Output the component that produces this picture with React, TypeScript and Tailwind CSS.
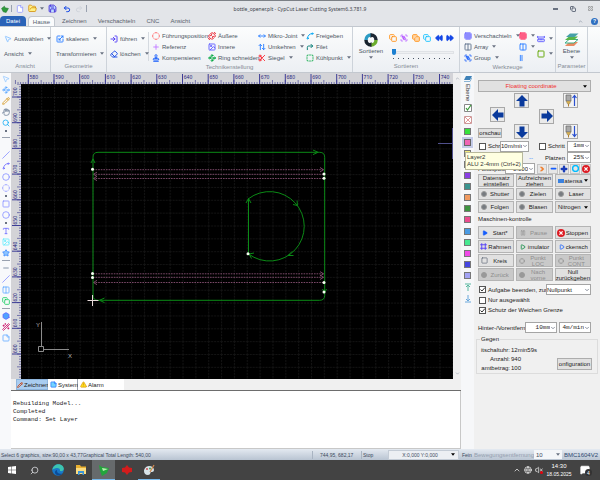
import React from 'react';
import {
  Undo2, Redo2, Save, File, FolderOpen, MousePointer2, Hand, Search, Type, Spline, Circle, Square, Minus, Slash,
  Hexagon, Wand2, Crosshair, Scaling, LogIn, Eraser, Plus, Copy, Layers, CircleDashed, ArrowUpDown, Scissors,
  Grid3x3, Group, BoxSelect, Columns2, Tally2, RulerDimensionLine, Rewind, FastForward, Globe, VolumeX,
  MessageSquareText, ChevronUp, ChevronDown, Star, StickyNote, Play, Pause, Frame, Waypoints, Stamp,
  CornerUpRight, Puzzle, ImageIcon, Pencil, TriangleAlert, MoveHorizontal,
} from 'lucide-react';

type IconType = React.ComponentType<{ className?: string; strokeWidth?: number }>;

// pixels per 10 mm on both rulers
const STEP = 25.7;

function Caret({ className = 'text-gray-500' }: { className?: string }) {
  return (
    <svg viewBox="0 0 6 4" className={`h-[3px] w-1 shrink-0 ${className}`}>
      <path d="M0 0h6L3 4z" fill="currentColor" />
    </svg>
  );
}

interface ToolProps {
  icon?: IconType;
  label?: string;
  color?: string;
  caret?: boolean;
}

function Tool({ icon: Icon, label, color = 'text-blue-500', caret }: ToolProps) {
  return (
    <button className="flex h-[11px] items-center gap-[2px] whitespace-nowrap text-left" aria-label={label || 'Werkzeug'}>
      {Icon && <Icon className={`size-2 shrink-0 ${color}`} strokeWidth={2.8} />}
      {label && <span>{label}</span>}
      {caret && <span className="pl-[2px]"><Caret /></span>}
    </button>
  );
}

function RibbonGroup({ title, className, children }: { title: string; className: string; children: React.ReactNode }) {
  return (
    <section className={`flex shrink-0 flex-col border-r border-[#cdd3da] pt-[3px] ${className}`}>
      <div className="flex flex-1">{children}</div>
      <h2 className="h-[10px] text-center leading-2 text-[#858c96]">{title}</h2>
    </section>
  );
}

function SortIcon() {
  return (
    <svg viewBox="0 0 28 28" className="size-[14px]">
      <path d="M14 4a10 10 0 0 1 10 10" fill="none" stroke="#1d2733" strokeWidth="7" />
      <path d="M24 14a10 10 0 0 1-10 10" fill="none" stroke="#6cae2e" strokeWidth="7" />
      <path d="M14 24A10 10 0 0 1 4 14" fill="none" stroke="#16222c" strokeWidth="7" />
      <path d="M4 14A10 10 0 0 1 14 4" fill="none" stroke="#2c9cc4" strokeWidth="7" />
      <path d="M13 0l7 5-7 5zM15 28l-7-5 7-5z" fill="#1d2733" />
    </svg>
  );
}

function LayerIcon() {
  return (
    <svg viewBox="0 0 30 28" className="h-[14px] w-[15px]">
      <path d="M2 26l8-8h18l-8 8z" fill="#e98a62" />
      <path d="M2 20l8-7h18l-8 7z" fill="#fff" stroke="#3cae86" strokeWidth="2" />
      <path d="M2 14l8-7h18l-8 7z" fill="#58b548" />
      <path d="M4 8l8-7h17l-8 7z" fill="#46a1a8" />
    </svg>
  );
}

function TitleBar() {
  return (
    <header className="relative flex h-4 items-center border-t border-[#7c8086] bg-[#e3e5e9]">
      <div className="flex items-center gap-[3px] pl-px">
        <svg viewBox="0 0 14 14" className="size-2"><path d="M1 6l5-4 1 3 6 1-4 7-5-1z" fill="#2f9a3c" stroke="#1f7a2c" /></svg>
        <span className="-ml-px h-[7px] w-px bg-gray-400" />
        <File className="ml-px size-2 fill-white text-indigo-400" strokeWidth={2} />
        <FolderOpen className="ml-px size-[9px] fill-yellow-200 text-yellow-600" strokeWidth={2} />
        <Caret />
        <Save className="ml-px size-[9px] fill-blue-200 text-indigo-700" strokeWidth={2.5} />
        <Undo2 className="ml-[3px] size-2 text-blue-700" strokeWidth={3} />
        <Redo2 className="ml-px size-2 text-gray-300" strokeWidth={3} />
        <span className="h-[7px] w-px bg-gray-400" />
      </div>
      <h1 className="absolute inset-x-0 text-center font-['Noto_Sans',sans-serif] text-[5px] text-[#3d424a]">
        bottle_opener.plt - CypCut Laser Cutting System6.3.781.9
      </h1>
      <div className="ml-auto flex items-center gap-3 pr-[7px] text-gray-500">
        <span className="h-[2px] w-[5px] border border-gray-500" />
        <Copy className="size-[6px]" strokeWidth={4} />
        <svg viewBox="0 0 10 10" className="size-[5px]"><path d="M1 1h3l1 2 1-2h3v3L7 5l2 1v3H6L5 7 4 9H1V6l2-1-2-1z" fill="#d8dade" stroke="#777" strokeWidth="1" /></svg>
      </div>
    </header>
  );
}

function Tabs() {
  return (
    <nav className="flex h-[10px] items-stretch bg-[#e3e5e9] text-[#59616c]">
      <a href="#datei" className="flex w-[26px] items-center justify-center rounded-t-sm bg-[#2a63b8] text-white">Datei</a>
      <a href="#hause" className="ml-[2px] flex w-[27px] items-center justify-center rounded-t-sm border border-b-0 border-[#c3c8cf] bg-[#fafbfc]">Hause</a>
      <a href="#zeichnen" className="ml-[7px] flex items-center">Zeichnen</a>
      <a href="#verschachteln" className="ml-[11px] flex items-center">Verschachteln</a>
      <a href="#cnc" className="ml-[11px] flex items-center">CNC</a>
      <a href="#ansicht" className="ml-[11px] flex items-center">Ansicht</a>
      <div className="ml-auto flex items-center gap-2 pr-[2px]">
        <ChevronUp className="size-[5px] text-gray-400" strokeWidth={4} />
        <span className="flex size-[7px] items-center justify-center rounded-full bg-[#2e6fc0] text-[5px] font-bold text-white">?</span>
      </div>
    </nav>
  );
}

function Ribbon() {
  return (
    <div className="flex h-[47px] overflow-hidden border-y border-[#c3c8cf] bg-gradient-to-b from-[#fcfdfd] to-[#eceff3] text-[#4b5563]">
      <RibbonGroup title="Ansicht" className="w-[51px]">
        <div className="flex flex-col gap-1 pt-[3px] pl-1">
          <Tool icon={MousePointer2} label="Auswählen" color="text-blue-300" caret />
          <Tool label="Ansicht" caret />
        </div>
      </RibbonGroup>
      <RibbonGroup title="Geometrie" className="w-14">
        <div className="flex flex-col gap-1 pt-[3px] pl-[5px]">
          <Tool icon={Scaling} label="skaleren" caret />
          <Tool label="Transformieren" caret />
        </div>
      </RibbonGroup>
      <RibbonGroup title="Technikenstellung" className="w-[246px]">
        <div className="my-[2px] flex w-[42px] flex-col gap-1 border-r border-[#d5dae0] pt-px pl-[3px]">
          <Tool icon={LogIn} label="führen" color="text-indigo-600" caret />
          <Tool icon={Eraser} label="löschen" color="text-blue-700" caret />
        </div>
        <div className="flex w-[57px] flex-col pl-[3px]">
          <Tool icon={CircleDashed} label="Führungsposition" color="text-red-400" />
          <Tool icon={Plus} label="Referenz" color="text-purple-400" />
          <Tool icon={Stamp} label="Kompensieren" color="text-blue-600" />
        </div>
        <div className="flex w-[51px] flex-col pl-[2px]">
          <Tool icon={Puzzle} label="Äußere" color="text-red-600" />
          <Tool icon={ImageIcon} label="Innere" color="text-indigo-500" />
          <Tool icon={Waypoints} label="Ring schneiden" color="text-green-600" />
        </div>
        <div className="flex w-12 flex-col pl-px">
          <Tool icon={MoveHorizontal} label="Mikro-Joint" caret />
          <Tool icon={ArrowUpDown} label="Umkehren" caret />
          <Tool icon={Scissors} label="Siegel" color="text-red-500" caret />
        </div>
        <div className="flex flex-col pl-px">
          <Tool icon={Spline} label="Freigeben" color="text-sky-500" />
          <Tool icon={CornerUpRight} label="Filet" color="text-teal-700" />
          <Tool icon={BoxSelect} label="Kühlpunkt" color="text-green-600" caret />
        </div>
      </RibbonGroup>
      <RibbonGroup title="Sortieren" className="w-[107px]">
        <button className="flex w-9 flex-col items-center pt-[3px]">
          <SortIcon />
          <span className="leading-[9px]">Sortieren</span>
          <Caret />
        </button>
        <div className="flex flex-1 flex-col pt-1 pr-[5px]">
          <div className="flex items-center justify-between">
            <Copy className="size-2 text-orange-400" strokeWidth={2.5} />
            <Group className="size-2 text-purple-500" strokeWidth={2.5} />
            <Copy className="size-2 fill-orange-200 text-orange-400" strokeWidth={2.5} />
            <Copy className="size-2 text-sky-400" strokeWidth={2.5} />
            <Rewind className="size-2 fill-blue-700 text-blue-700" />
            <FastForward className="size-2 fill-blue-700 text-blue-700" />
          </div>
          <div className="mt-[7px] flex items-center">
            <span className="ml-[3px] h-[6px] w-1 rounded-b-sm bg-[#1b7fd0]" />
            <span className="h-[3px] flex-1 border border-[#dfe2e6] bg-[#eef0f2]" />
          </div>
          <div className="mt-[3px] flex justify-between px-1">
            {Array.from({ length: 12 }, (_, i) => <span key={i} className="size-px bg-gray-600" />)}
          </div>
        </div>
      </RibbonGroup>
      <RibbonGroup title="Werkzeuge" className="w-24">
        <div className="flex w-[59px] flex-col pl-1">
          <Tool icon={Grid3x3} label="Verschachteln" color="text-indigo-500" caret />
          <Tool icon={Columns2} label="Array" color="text-slate-500" caret />
          <Tool icon={Group} label="Group" color="text-blue-600" caret />
        </div>
        <div className="flex w-[18px] flex-col">
          <Tool icon={Grid3x3} color="text-rose-500" caret />
          <Tool icon={Columns2} color="text-blue-500" caret />
          <Tool icon={Tally2} color="text-blue-500" />
        </div>
        <div className="flex flex-col gap-1 pt-[3px]">
          <Tool icon={RulerDimensionLine} color="text-indigo-500" caret />
          <Tool icon={Square} color="text-lime-600" caret />
        </div>
      </RibbonGroup>
      <RibbonGroup title="Parameter" className="w-8">
        <button className="flex flex-1 flex-col items-center pt-[3px]">
          <LayerIcon />
          <span className="leading-[9px]">Ebene</span>
          <Caret />
        </button>
      </RibbonGroup>
    </div>
  );
}

const drawTools: (['dot' | 'line'] | [IconType, string])[] = [
  [MousePointer2, 'text-blue-300'], [Waypoints, 'text-blue-400'], [Pencil, 'text-yellow-600'], [Hand, 'text-slate-500'],
  [Search, 'text-sky-500'], ['dot'], ['line'], [Slash, 'text-indigo-400'], [Spline, 'text-indigo-500'],
  [Circle, 'text-indigo-400'], [CircleDashed, 'text-indigo-400'], ['dot'], [Square, 'text-indigo-400'],
  [Circle, 'text-indigo-400'], ['dot'], [Type, 'text-indigo-500'], [ImageIcon, 'text-cyan-300'],
  [Star, 'fill-blue-300 text-blue-500'], ['line'], [Minus, 'text-slate-500'], [Slash, 'text-indigo-400'],
  [Columns2, 'text-blue-400'], [Copy, 'text-green-500'], ['line'], [Hexagon, 'fill-blue-400 text-indigo-500'],
  [Wand2, 'text-pink-700'], [StickyNote, 'text-blue-400'],
];

function DrawToolbar() {
  return (
    <aside className="flex w-[11px] shrink-0 flex-col items-center gap-[3px] bg-[#f8f9fb] pt-[2px]">
      {drawTools.map(([Icon, color], i) => {
        if (Icon === 'dot') return <span key={i} className="size-[2px] bg-gray-500" />;
        if (Icon === 'line') return <span key={i} className={i === 6 ? 'mt-[2px] mb-[10px] h-px w-2 bg-gray-400' : 'h-px w-2 bg-gray-400'} />;
        return (
          <button key={i} aria-label={`Zeichenwerkzeug ${i + 1}`}>
            <Icon className={`size-2 ${color}`} strokeWidth={2.2} />
          </button>
        );
      })}
    </aside>
  );
}

function TopRuler() {
  return (
    <svg className="h-[11px] w-full bg-[#d3d3d7] font-['Noto_Sans']">
      <g transform="translate(-11 -73)">
        {Array.from({ length: 170 }, (_, i) => {
          const x = 28.3 + ((i - 5) * STEP) / 10;
          return <path key={i} d={`M${x} 84v${i % 5 === 0 ? -4 : -2}`} stroke="#5a5aa0" strokeWidth="0.8" />;
        })}
        {Array.from({ length: 17 }, (_, i) => (
          <g key={i}>
            <path d={`M${28.3 + i * STEP} 74v10`} stroke="#3c3c96" strokeWidth="1" />
            <text x={29.5 + i * STEP} y="79" fontSize="5" fill="#22227c">{580 + i * 10}</text>
          </g>
        ))}
      </g>
    </svg>
  );
}

function SideRuler() {
  return (
    <svg className="h-full w-[10px] shrink-0 bg-[#d3d3d7] font-['Noto_Sans']">
      <g transform="translate(-11 -84)">
        {Array.from({ length: 115 }, (_, i) => {
          const y = 97 + ((i - 5) * STEP) / 10;
          return <path key={i} d={`M21 ${y}h${i % 5 === 0 ? -4 : -2}`} stroke="#5a5aa0" strokeWidth="0.8" />;
        })}
        {Array.from({ length: 11 }, (_, i) => (
          <g key={i}>
            <path d={`M12 ${97 + i * STEP}h9`} stroke="#3c3c96" strokeWidth="1" />
            <text transform={`translate(17 ${96 + i * STEP}) rotate(-90)`} fontSize="5" fill="#22227c">{700 - i * 10}</text>
          </g>
        ))}
      </g>
    </svg>
  );
}

const cutLines = [
  { y: 169.7, dir: 1 }, { y: 174.3, dir: -1 }, { y: 178.5, dir: -1 },
  { y: 273.8, dir: 1 }, { y: 277.3, dir: 1 }, { y: 282.5, dir: -1 },
];
const startPoints = [[92.5, 169.3], [324, 174], [324, 178.3], [92.5, 273.5], [92.5, 277.5], [324, 282.5], [324, 292], [248, 253.7]];

function Drawing() {
  return (
    <svg className="min-w-0 flex-1 bg-black font-['Liberation_Sans']">
      <defs>
        <pattern id="grid" width="12.85" height="12.85" patternUnits="userSpaceOnUse" x="28.3" y="97">
          <path d="M0 .5h13M.5 0v13" stroke="#131313" strokeWidth="1" strokeDasharray="2 1" />
        </pattern>
      </defs>
      <g transform="translate(-21 -84)" fill="none">
        <rect x="21" y="84" width="3000" height="2000" fill="url(#grid)" />
        {cutLines.map(({ y, dir }) => (
          <g key={y} stroke="#875073" strokeWidth="0.9">
            <path d={`M93 ${y}H324`} strokeDasharray="1.6 1" />
            <path d={dir > 0 ? `M320 ${y - 2.2}l3.5 2.2-3.5 2.2` : `M97 ${y - 2.2}l-3.5 2.2 3.5 2.2`} />
          </g>
        ))}
        <g stroke="#0b8a16" strokeWidth="1">
          <path d="M93 296V157.300q0-5 5-5H319.700q5 0 5 5V295.300q0 5-5 5H98q-5 0-5-5" />
          <path d="M248.500 253.900V198.700A34.700 34.700 0 1 1 248.500 253.900" />
          <path d="M91 163l2-4 2 4M313 150l5 2.300-5 2.300M104.500 298l-5 2.300 5 2.300M322.500 289l2 4 2-4" />
          <path d="M246 203l2.500-4.500 2.500 4.500M293 204.500l4.500 1-.5-5M292 251.500l-4 4 5.500 0M254 253l-5 1 2.500 4.500" />
        </g>
        {startPoints.map(([x, y], i) => <circle key={i} cx={x} cy={y} r="1.5" fill="#f4fff0" />)}
        <path d="M87.500 300.500h11M92.500 295v11" stroke="#e8dada" />
        <path d="M438 143.500h15M452.500 128v31" stroke="#50508c" />
        <g stroke="#8c8c8c">
          <path d="M38.500 346.500h5v5h-5zM41.500 346v-24M44 349.500h25" />
        </g>
        <g fill="#b0b0b0" fontSize="6">
          <text x="36" y="327">Y</text>
          <text x="68" y="358">X</text>
        </g>
      </g>
    </svg>
  );
}

function Workspace() {
  return (
    <main className="flex min-w-0 flex-1 flex-col">
      <div className="flex flex-1">
        <div className="flex min-w-0 flex-1 flex-col">
          <TopRuler />
          <div className="flex min-h-[294px] flex-1"><SideRuler /><Drawing /></div>
        </div>
        <div className="flex w-2 flex-col items-center justify-between bg-[#f0f0f0] py-[3px] text-gray-400">
          <ChevronUp className="size-[5px]" strokeWidth={3} />
          <ChevronDown className="size-[5px]" strokeWidth={3} />
        </div>
      </div>
      <div className="flex h-3 items-stretch border-b border-[#6d6d6d] bg-[#f0f0f0] text-[#222]">
        <button className="ml-[5px] flex w-8 items-center gap-px border border-[#8fb5dc] bg-[#a9cdf0]">
          <Pencil className="size-[6px] shrink-0 text-orange-700" strokeWidth={3} />Zeichnen
        </button>
        <button className="flex w-[30px] items-center gap-px border-r border-gray-400 bg-white pl-[2px]">
          <StickyNote className="size-[7px] shrink-0 fill-sky-300 text-blue-600" />System
        </button>
        <button className="flex w-[46px] items-center gap-px bg-white pl-[2px]">
          <TriangleAlert className="size-[7px] shrink-0 fill-yellow-300 text-yellow-600" />Alarm
        </button>
      </div>
      <pre className="h-[58px] border-r border-b border-[#c8c8c8] bg-white pt-[9px] pl-[2px] font-['Liberation_Mono',monospace] text-[6px] leading-[8px] text-[#222]">
        {'Rebuilding Model...\nCompleted\nCommand: Set Layer'}
      </pre>
    </main>
  );
}

const layerColors = ['#37e23c', '#f064b4', '#f4ec7c', '#f3a0a0', '#8a3fe4', '#3b9490', '#f09a60', '#3e9440', '#ea4b8e', '#4a9be4', '#46e890', '#f04ae8', '#4545e0', '#a3a3f4'];

function LayerBar() {
  return (
    <aside className="relative flex w-[13px] shrink-0 flex-col items-center bg-[#f6f7f9] pt-[2px]">
      <svg viewBox="0 0 8 8" className="size-2"><path d="M0 5l2-4h6L6 5z" fill="#3f82b8" /><path d="M0 6.500h6l2-4" fill="none" stroke="#8ab4d4" /></svg>
      <span className="mt-px flex h-5 items-center text-[6px] leading-[7px] text-[#333] [writing-mode:vertical-rl]">Ebene</span>
      <div className="flex h-[199px] flex-col items-center justify-between">
        <svg viewBox="0 0 8 8" className="size-2"><path d="M.5.5h7v7h-7z" fill="#fff" stroke="#888" /><path d="M2 4l1.500 2L7 1" fill="none" stroke="#3a9a3a" strokeWidth="1.200" /></svg>
        <svg viewBox="0 0 8 8" className="size-2"><path d="M.5.5h7v7h-7z" fill="#fff" stroke="#c99" /><path d="M1 1l6 6M7 1L1 7" stroke="#e49a9a" /></svg>
        {layerColors.map((c, i) => (
          <button
            key={c}
            aria-label={`Layer${i + 1}`}
            style={{ backgroundColor: c }}
            className={i === 1 ? 'size-[7px] border border-[#666] outline-2 outline-[#c4cbe8]' : 'size-[7px] border border-[#777]'}
          />
        ))}
        <svg viewBox="0 0 8 8" className="size-2"><path d="M1 1h6M4 8V2M2 4l2-2 2 2" fill="none" stroke="#58b8a0" /></svg>
        <svg viewBox="0 0 8 8" className="size-2"><path d="M1 7h6M4 0v6M2 4l2 2 2-2" fill="none" stroke="#6aa8dc" /></svg>
      </div>
      <div role="tooltip" className="absolute top-[79px] left-1 z-10 border border-[#b8b89c] bg-[#ffffe1] px-px py-px text-[6px] leading-[7px] whitespace-nowrap text-[#333]">
        Layer2<br />ALU 2-4mm (Ctrl+2)
      </div>
    </aside>
  );
}

function ArrowButton({ turn, label }: { turn: string; label: string }) {
  return (
    <button aria-label={label} className="flex size-[15px] items-center justify-center border border-[#a8a8a8] bg-[#eaeaea]">
      <svg viewBox="0 0 12 12" className={`size-3 ${turn}`}><path d="M6 0l6 6H8.500v5.500h-5V6H0z" fill="#0a3a9c" /></svg>
    </button>
  );
}

function NozzleButton({ down }: { down?: boolean }) {
  return (
    <button aria-label={down ? 'Z ab' : 'Z auf'} className="flex size-[15px] items-center justify-center border border-[#a8a8a8] bg-[#f2f2f2]">
      <svg viewBox="0 0 13 13" className="size-[13px]">
        <path d="M2 1h5v6H2z" fill="#aaa" stroke="#666" strokeWidth=".7" />
        <path d="M2 7h5l-1.500 3h-2z" fill="#d8b050" stroke="#777" strokeWidth=".4" />
        <path d="M4.500 10v2.500" stroke="#b08030" />
        <path d={down ? 'M10.500 1v10M8.500 9l2 2.500 2-2.500' : 'M10.500 12V2M8.500 4l2-2.500 2 2.500'} fill="none" stroke="#2a50d0" strokeWidth="1.200" />
      </svg>
    </button>
  );
}

function Drop({ value, label, className }: { value: string; label: string; className: string }) {
  return (
    <span className={`flex h-[11px] shrink-0 items-center border border-[#a5a5a5] bg-white ${className}`}>
      <select aria-label={label} className="min-w-0 flex-1 appearance-none bg-transparent text-[#222]">
        <option>{value}</option>
      </select>
      <ChevronDown className="pointer-events-none size-[6px] shrink-0 text-gray-500" strokeWidth={3} />
    </span>
  );
}

function Check({ label, checked }: { label: string; checked?: boolean }) {
  return (
    <label className="flex h-[10px] items-center gap-[2px] whitespace-nowrap">
      <span className="relative flex size-[7px] shrink-0">
        <input type="checkbox" defaultChecked={checked} className="peer size-[7px] appearance-none border border-[#555] bg-white" />
        <svg viewBox="0 0 7 7" className="pointer-events-none absolute inset-0 hidden size-[7px] peer-checked:block">
          <path d="M1.500 3.500L3 5l3-3.500" fill="none" stroke="#333" />
        </svg>
      </span>
      {label}
    </label>
  );
}

function Dot({ className = 'bg-[#777b80]' }: { className?: string }) {
  return <span className={`ml-px size-[6px] shrink-0 rounded-full border border-[#9a9a9a] ${className}`} />;
}

function StopIcon() {
  return (
    <svg viewBox="0 0 10 10" className="size-2 shrink-0">
      <circle cx="5" cy="5" r="5" fill="#dc1c24" />
      <path d="M3 3l4 4M7 3L3 7" stroke="#fff" strokeWidth="1.600" />
    </svg>
  );
}

function PanelButton({ icon, children, disabled, className = 'h-[13px]' }: { icon?: React.ReactNode; children: React.ReactNode; disabled?: boolean; className?: string }) {
  return (
    <button
      disabled={disabled}
      className={`flex min-w-0 items-center border border-[#b4b4b4] bg-[#e1e1e1] px-px whitespace-nowrap disabled:bg-[#c9c9c9] disabled:text-[#8e8e8e] ${className}`}
    >
      {icon}
      <span className="flex min-w-0 flex-1 justify-center text-center leading-[6px]">{children}</span>
    </button>
  );
}

function ControlPanel() {
  return (
    <aside className="w-[126px] shrink-0 bg-[#f0f0f0] text-[6px] text-[#222]">
      <div className="flex flex-col pt-[7px] pr-[9px] pl-1">
        <div className="flex h-3 items-center border border-[#adadad] bg-[#e1e1e1] pr-[3px]">
          <select aria-label="Koordinaten" className="min-w-0 flex-1 appearance-none text-center [text-align-last:center] text-[#f03030]">
            <option>Floating coordinate</option>
          </select>
          <Caret className="text-black" />
        </div>
        <div className="mt-px flex items-end">
          <div className="flex flex-col items-start">
            <span className="ml-3"><ArrowButton turn="-rotate-90" label="Links" /></span>
            <button className="mt-[6px] mb-px flex h-[10px] w-6 justify-center border border-[#adadad] bg-[#e1e1e1] leading-2">orschau</button>
          </div>
          <div className="ml-[9px] flex flex-col gap-4">
            <ArrowButton turn="" label="Oben" />
            <ArrowButton turn="rotate-180" label="Unten" />
          </div>
          <div className="ml-[10px] self-center"><ArrowButton turn="rotate-90" label="Rechts" /></div>
          <div className="ml-[9px] flex flex-col gap-4">
            <NozzleButton />
            <NozzleButton down />
          </div>
        </div>
        <div className="mt-px flex h-3 items-center justify-between">
          <div className="flex w-[51px] items-center pl-px">
            <div className="w-[21px]"><Check label="Schr" /></div>
            <Drop label="Schnell" value="10m/min" className="w-[29px]" />
          </div>
          <div className="flex items-center">
            <div className="w-7"><Check label="Schritt" /></div>
            <Drop label="Schritt" value="1mm" className="w-6 font-['Liberation_Mono'] [&>select]:text-right" />
          </div>
        </div>
        <div className="flex h-[11px] items-center justify-end">
          <span className="mr-3 text-blue-500">--</span>
          <span className="mr-[2px]">Platzen</span>
          <Drop label="Platzen" value="25%" className="w-6 font-['Liberation_Mono'] [&>select]:text-right" />
        </div>
        <div className="flex h-[11px] items-center">
          <span className="w-[27px] whitespace-nowrap">Fokusposi</span>
          <Drop label="Fokusposition" value="0.000" className="w-[30px] [&>select]:text-right" />
          <div className="ml-auto flex gap-px">
            <button aria-label="Weiter" className="flex size-[10px] items-center justify-center border border-[#c4c4c4] bg-[#e6e6e6]">
              <svg viewBox="0 0 8 8" className="size-[6px]"><path d="M1 1h3l3 3-3 3H1l3-3z" fill="#f08030" /></svg>
            </button>
            <button aria-label="Minus" className="flex size-[10px] items-center justify-center border border-[#c4c4c4] bg-[#e6e6e6]"><Minus className="size-[7px] text-blue-600" strokeWidth={6} /></button>
            <button aria-label="Plus" className="flex size-[10px] items-center justify-center border border-[#c4c4c4] bg-[#e6e6e6]"><Plus className="size-2 text-blue-800" strokeWidth={7} /></button>
            <button aria-label="Kreis" className="flex size-[10px] items-center justify-center border border-[#c4c4c4] bg-[#e6e6e6]"><Circle className="size-[7px] text-sky-400" strokeWidth={5} /></button>
            <button aria-label="Abbrechen" className="flex size-[10px] items-center justify-center border border-[#c4c4c4] bg-[#e6e6e6]"><StopIcon /></button>
          </div>
        </div>
        <div className="grid grid-cols-3 gap-x-[2px] gap-y-px">
          <PanelButton className="h-[13px]">Datensatz<br />einstellen</PanelButton>
          <PanelButton className="h-[13px]">Aufzeichnen<br />ziehen</PanelButton>
          <PanelButton className="h-[13px]" icon={<span className="ml-px h-1 w-[6px] shrink-0 bg-[#3b82e0]" />}><span className="flex items-center gap-[2px]">atensa<Caret className="text-black" /></span></PanelButton>
          <PanelButton className="h-3" icon={<Dot />}>Shutter</PanelButton>
          <PanelButton className="h-3" icon={<Dot />}>Zielen</PanelButton>
          <PanelButton className="h-3" icon={<Dot />}>Laser</PanelButton>
          <PanelButton className="h-3" icon={<Dot />}>Folgen</PanelButton>
          <PanelButton className="h-3" icon={<Dot />}>Blasen</PanelButton>
          <PanelButton className="h-3"><span className="flex items-center gap-[3px]">Nitrogen<Caret className="text-black" /></span></PanelButton>
        </div>
        <h3 className="mt-[2px] h-[11px] leading-2">Maschinen-kontrolle</h3>
        <div className="grid grid-cols-3 gap-x-[2px] gap-y-px">
          <PanelButton icon={<Play className="ml-[2px] size-[6px] fill-blue-600 text-blue-600" />}>Start*</PanelButton>
          <PanelButton disabled icon={<Pause className="ml-[2px] size-[6px]" />}>Pause</PanelButton>
          <PanelButton icon={<StopIcon />}>Stoppen</PanelButton>
          <PanelButton icon={<Frame className="size-[7px] text-indigo-600" strokeWidth={3} />}>Rahmen</PanelButton>
          <PanelButton icon={<Play className="ml-[2px] size-[6px] text-green-700" strokeWidth={3} />}>imulator</PanelButton>
          <PanelButton icon={<Play className="ml-[2px] size-[6px] text-blue-600" strokeWidth={3} />}>ckensch</PanelButton>
          <PanelButton icon={<Square className="ml-px size-[7px] text-gray-600" />}>Kreis</PanelButton>
          <PanelButton disabled icon={<Crosshair className="ml-px size-[6px]" />}>Punkt<br />LOC</PanelButton>
          <PanelButton disabled icon={<Crosshair className="ml-px size-[6px]" />}>Punkt<br />CONT</PanelButton>
          <PanelButton disabled icon={<Dot className="bg-[#999]" />}>Zurück</PanelButton>
          <PanelButton disabled icon={<Dot className="bg-[#999]" />}>Nach<br />vorne</PanelButton>
          <PanelButton>Null<br />zurückgeben</PanelButton>
        </div>
        <div className="mt-[3px] flex h-[11px] items-center justify-between">
          <div className="w-[68px] pl-px"><Check label="Aufgabe beenden, zur" checked /></div>
          <Drop label="Rückkehrpunkt" value="Nullpunkt" className="w-[45px]" />
        </div>
        <div className="pl-px">
          <Check label="Nur ausgewählt" />
          <Check label="Schutz der Weichen Grenze" checked />
        </div>
        <div className="mt-[7px] flex items-center gap-[2px]">
          <span className="min-w-0 flex-1 whitespace-nowrap">Hinter-/Vorentfern</span>
          <Drop label="Entfernung" value="10mm" className="w-8 font-['Liberation_Mono'] [&>select]:text-right" />
          <Drop label="Geschwindigkeit" value="4m/min" className="w-8 font-['Liberation_Mono'] [&>select]:text-right" />
        </div>
      </div>
      <fieldset className="mx-[2px] mt-[3px] flex h-[38px] items-end justify-between border border-[#dcdcdc] pr-[5px] pl-[2px]">
        <legend className="ml-px px-px leading-[7px]">Gegen</legend>
        <dl className="grid grid-cols-[31px_auto] gap-x-px leading-[9px] whitespace-nowrap">
          <dt className="text-right">itschaltuhr:</dt><dd>12min59s</dd>
          <dt className="text-right">Anzahl:</dt><dd>940</dd>
          <dt className="text-right">amtbetrag:</dt><dd>100</dd>
        </dl>
        <button className="mb-[3px] flex h-3 w-[35px] items-center justify-center border border-[#adadad] bg-[#e1e1e1]">onfiguration</button>
      </fieldset>
    </aside>
  );
}

function StatusBar() {
  return (
    <footer className="flex h-[11px] items-center bg-gradient-to-b from-[#e4eaf1] to-[#b9c4d2] text-[5px] whitespace-nowrap text-[#3d4a5c]">
      <span className="min-w-0 flex-1 pl-px">Select 6 graphics, size:90,00 x 43,77Graphical Total Length: 540,00</span>
      <span className="w-[49px] border-l border-[#a9b4c2] pl-[7px]">744,95, 682,17</span>
      <span className="w-[27px] border-l border-[#a9b4c2] pl-px">Stop</span>
      <button className="flex h-[10px] w-[71px] items-center border border-[#c4ccd6] bg-[#eceff3] pr-[3px]">
        <span className="flex-1">X:0,000 Y:0,000</span><Caret className="text-black" />
      </button>
      <span className="w-[14px] pl-[3px]">Fein</span>
      <label htmlFor="distance" className="w-[61px] pl-px text-[6px] text-[#95a1b0]">Bewegungsentfernung</label>
      <span className="flex h-[9px] w-7 items-center bg-[#f4f6f9] pr-[2px]">
        <select id="distance" className="min-w-0 flex-1 appearance-none pl-[2px] text-[6px]"><option>10</option></select>
        <Caret />
      </span>
      <span className="w-[38px] pl-[2px] text-[6px] text-[#2e4a70]">BMC1604V2</span>
    </footer>
  );
}

function Taskbar() {
  return (
    <div className="flex h-5 items-stretch bg-[#434343] text-[6px] text-white">
      <button aria-label="Start" className="flex w-[23px] items-center justify-center">
        <svg viewBox="0 0 8 8" className="size-2"><path d="M0 1l3.500-.5V3.700H0zM4 .4L8 0v3.700H4zM0 4.200h3.500v3.300L0 7zM4 4.200h4V8l-4-.5z" fill="#fff" /></svg>
      </button>
      <button aria-label="Suche" className="flex w-[23px] items-center justify-center"><Search className="size-[9px] -scale-x-100 text-gray-200" /></button>
      <button aria-label="Edge" className="flex w-[23px] items-center justify-center">
        <svg viewBox="0 0 12 12" className="size-3">
          <circle cx="6" cy="6" r="5.800" fill="#1878c8" />
          <path d="M.4 6C.8 2 4 .2 6.500.2c3.500 0 5.300 2.600 5.300 4.500S10 7.500 8 7c.5-2-1-3-3-3C3 4 1 5 .4 6z" fill="#3cc4b0" />
          <path d="M5 6c-.5 3 2 4.500 5.500 3.500C9 12 4 12 3 9c-.4-1.500.8-3 2-3z" fill="#0c4c98" />
        </svg>
      </button>
      <button aria-label="Explorer" className="flex w-[23px] items-center justify-center">
        <svg viewBox="0 0 12 10" className="h-[10px] w-3"><path d="M1 0h4l1 1.500h5V9H1z" fill="#e8b030" /><path d="M1 3h10v6H1z" fill="#fbdc80" /><path d="M3 6h6v4H7.500V8h-3v2H3z" fill="#3a94d8" /></svg>
      </button>
      <button aria-label="CypCut" className="flex w-[23px] items-center justify-center border-b border-[#76b9ed] bg-[#666a6c]">
        <svg viewBox="0 0 12 12" className="size-3"><path d="M1 1l3 2 7 1-2 5-5 3-2-5z" fill="#23a53c" /><path d="M4 4l6 1-5 2z" fill="#b8f0b0" /></svg>
      </button>
      <button aria-label="Laser" className="flex w-[23px] items-center justify-center">
        <svg viewBox="0 0 12 12" className="size-3"><path d="M6 1l2 2.500L11 4v4l-3 .5L6 11 4 8.500 1 8V4l3-.5z" fill="#d41c1c" /></svg>
      </button>
      <button aria-label="Paint" className="flex w-[22px] items-center justify-center border-b border-[#76b9ed]">
        <svg viewBox="0 0 12 12" className="size-3"><path d="M6 2c3 0 5 2 5 4s-2 2-3 2 0 3-3 3-4-2-4-4 2-5 5-5z" fill="#d8e4ea" /><circle cx="4" cy="5" r="1" fill="#d05050" /><circle cx="7" cy="4.500" r="1" fill="#40a060" /><path d="M7 8l4-7" stroke="#d08a50" strokeWidth="1.300" /></svg>
      </button>
      <div className="ml-auto flex items-center gap-[3px] pr-[10px]">
        <ChevronUp className="size-2" strokeWidth={2} />
        <Globe className="size-2" strokeWidth={2} />
        <span className="relative">
          <VolumeX className="size-2" strokeWidth={2} />
          <span className="absolute right-0 bottom-0 size-[3px] rounded-full bg-red-600" />
        </span>
        <div className="w-[26px] text-center leading-2 whitespace-nowrap">14:30<br /><span className="text-[5px]">18.05.2025</span></div>
        <button aria-label="Mitteilungen" className="relative ml-[5px]">
          <MessageSquareText className="size-[10px] fill-white text-white" />
          <span className="absolute top-1 left-[5px] flex size-[7px] items-center justify-center rounded-full bg-[#333] text-[5px]">4</span>
        </button>
      </div>
    </div>
  );
}

export default function App() {
  return (
    <div className="flex min-h-screen flex-col bg-[#f0f0f0] font-['Liberation_Sans',Arial,sans-serif] text-[6px] leading-[8px]">
      <TitleBar />
      <Tabs />
      <Ribbon />
      <div className="flex flex-1">
        <DrawToolbar />
        <Workspace />
        <LayerBar />
        <ControlPanel />
      </div>
      <StatusBar />
      <Taskbar />
    </div>
  );
}
